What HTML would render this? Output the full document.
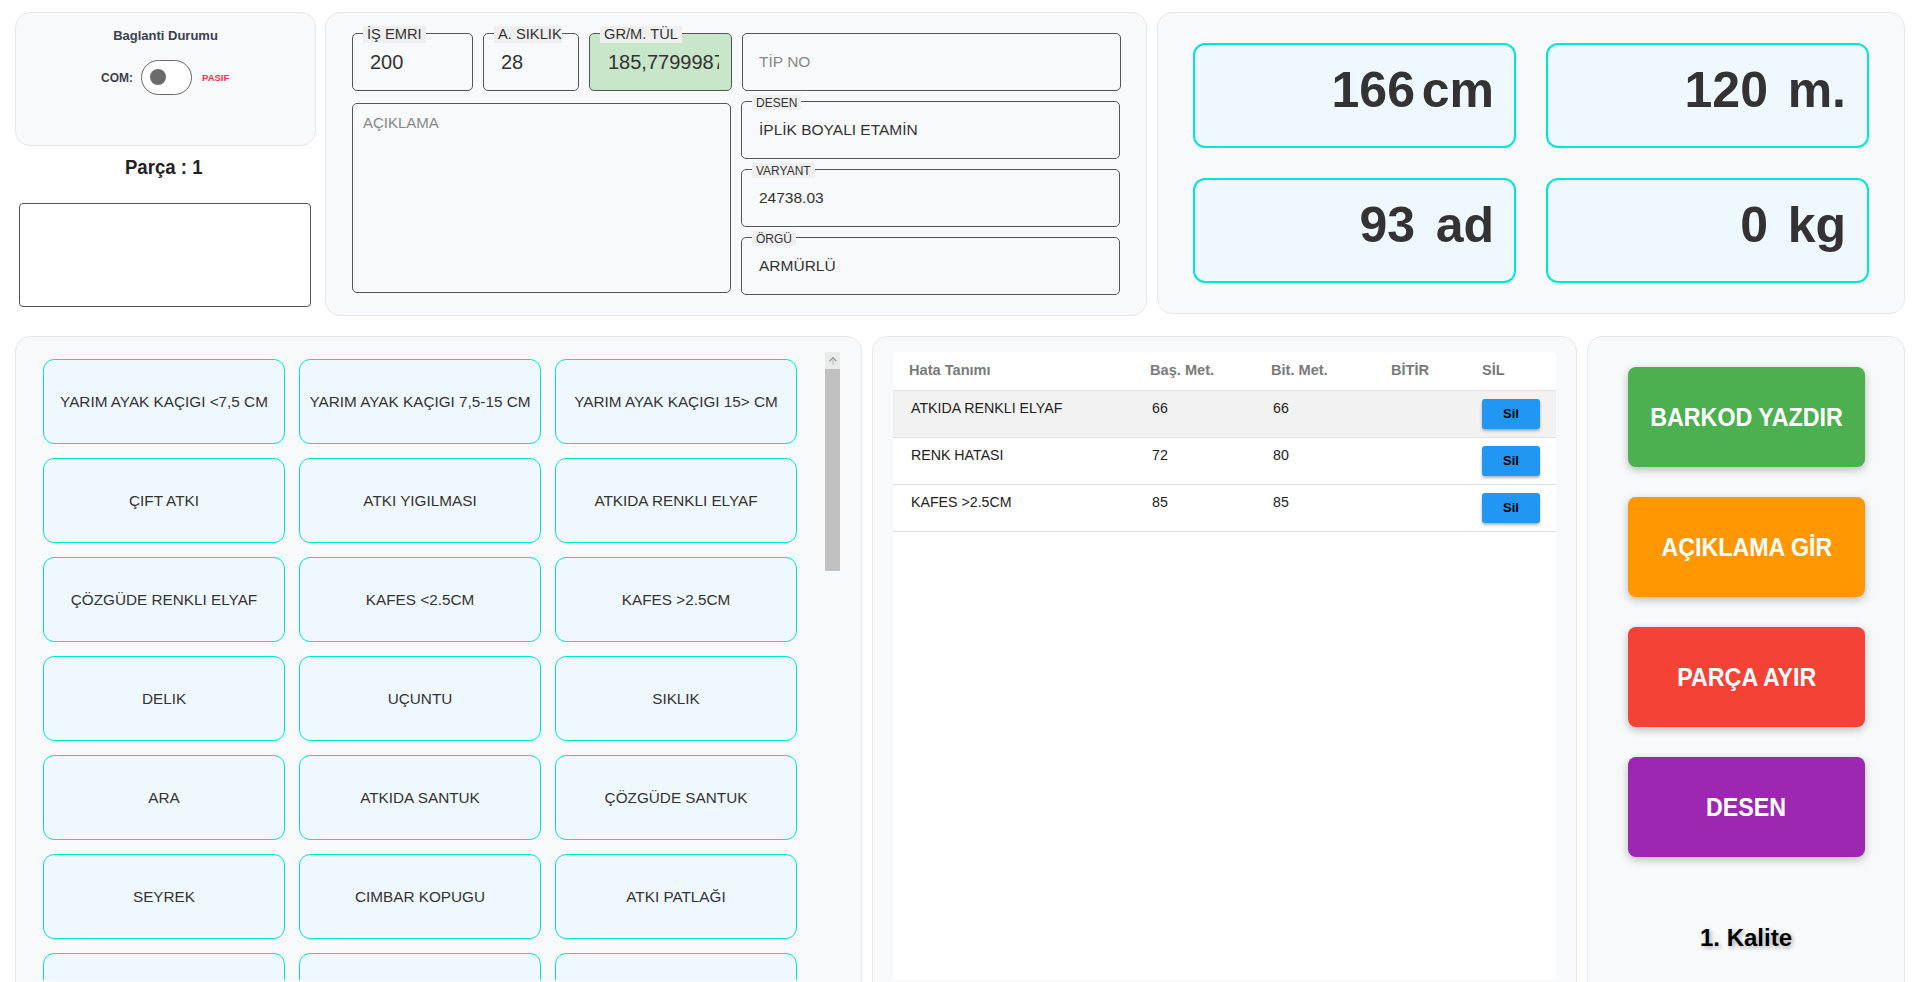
<!DOCTYPE html>
<html><head><meta charset="utf-8">
<style>
*{box-sizing:border-box;margin:0;padding:0}
html,body{width:1919px;height:982px;overflow:hidden;background:#fff;font-family:"Liberation Sans",sans-serif;color:#333}
.abs{position:absolute}
.panel{position:absolute;background:#f8f9fa;border:1px solid #e6e8eb;border-radius:15px}
.fs{position:absolute;border:1px solid #555;border-radius:5px}
.lg{position:absolute;background:#efefef;color:#333;white-space:nowrap;line-height:17px;padding:0 4px}
.lg.s{font-size:12px;line-height:14px;padding-top:1px}
.val{position:absolute;white-space:nowrap;color:#333}
.cy{position:absolute;background:#f0f8ff;border:1px solid #00e3d4;border-radius:11px;width:242px;height:85px;display:flex;align-items:center;justify-content:center;font-size:15.3px;color:#333;white-space:nowrap;padding-top:0px}
.big{position:absolute;background:#f0f8ff;border:2px solid #00e5d6;border-radius:12px}
.num{position:absolute;font-weight:bold;font-size:50px;margin-top:-1px;color:#333;white-space:nowrap;text-align:right}
.th{position:absolute;top:361.5px;font-size:14.6px;color:#7a7a7a;font-weight:bold;white-space:nowrap}
.td{position:absolute;font-size:14.2px;color:#222;white-space:nowrap;margin-top:-0.5px}
.sil{position:absolute;left:1482px;width:58px;height:30px;background:#2196f3;border-radius:3px;box-shadow:0 2px 3px rgba(0,0,0,.3);color:#000;font-weight:bold;font-size:13px;display:flex;align-items:center;justify-content:center;padding-bottom:1px}
.rb{position:absolute;left:1628px;width:237px;height:100px;border-radius:8px;box-shadow:0 3px 8px rgba(0,0,0,.25);color:#fff;font-weight:bold;font-size:25px;display:flex;align-items:center;justify-content:center;white-space:nowrap}
</style></head><body>

<!-- Panel A -->
<div class="panel" style="left:15px;top:12px;width:301px;height:134px"></div>
<div class="abs" style="left:15px;top:28px;width:301px;text-align:center;font-size:13px;font-weight:bold;color:#3a4150">Baglanti Durumu</div>
<div class="abs" style="left:101px;top:71px;font-size:12px;font-weight:bold;color:#3a4150">COM:</div>
<div class="abs" style="left:141px;top:60px;width:51px;height:35px;border:1px solid #666;border-radius:18px;background:#fff"></div>
<div class="abs" style="left:150px;top:69px;width:16px;height:16px;border-radius:50%;background:#6b6b6b"></div>
<div class="abs" style="left:202px;top:72px;font-size:9.5px;font-weight:bold;color:#ff3346">PASIF</div>

<div class="abs" style="left:13px;top:156px;width:301px;text-align:center;font-size:20px;font-weight:bold;color:#222"><span style="display:inline-block;transform:scaleX(.93)">Parça : 1</span></div>
<div class="abs" style="left:19px;top:203px;width:292px;height:104px;border:1px solid #555;border-radius:4px;background:#fff"></div>

<!-- Panel B -->
<div class="panel" style="left:325px;top:12px;width:822px;height:304px"></div>
<div class="fs" style="left:352px;top:33px;width:121px;height:58px"></div>
<div class="lg" style="left:363px;top:26px;font-size:14.7px">İŞ EMRI</div>
<div class="val" style="left:370px;top:51px;font-size:20px">200</div>

<div class="fs" style="left:483px;top:33px;width:96px;height:58px"></div>
<div class="lg" style="left:494px;top:26px;font-size:14.7px;padding-right:0">A. SIKLIK</div>
<div class="val" style="left:501px;top:51px;font-size:20px">28</div>

<div class="fs" style="left:589px;top:33px;width:143px;height:58px;background:#c8e6c9;overflow:hidden"><div class="val" style="left:18px;top:17px;font-size:20px;width:111px;overflow:hidden">185,7799987</div></div>
<div class="lg" style="left:600px;top:26px;font-size:14.7px">GR/M. TÜL</div>

<div class="fs" style="left:742px;top:33px;width:379px;height:58px"></div>
<div class="val" style="left:759px;top:53px;font-size:15.5px;color:#888">TİP NO</div>

<div class="fs" style="left:352px;top:103px;width:379px;height:190px"></div>
<div class="val" style="left:363px;top:113.5px;font-size:15px;color:#888">AÇIKLAMA</div>

<div class="fs" style="left:741px;top:101px;width:379px;height:58px"></div>
<div class="lg s" style="left:752px;top:95px">DESEN</div>
<div class="val" style="left:759px;top:121px;font-size:15.5px">İPLİK BOYALI ETAMİN</div>

<div class="fs" style="left:741px;top:169px;width:379px;height:58px"></div>
<div class="lg s" style="left:752px;top:163px">VARYANT</div>
<div class="val" style="left:759px;top:189px;font-size:15.5px">24738.03</div>

<div class="fs" style="left:741px;top:237px;width:379px;height:58px"></div>
<div class="lg s" style="left:752px;top:231px">ÖRGÜ</div>
<div class="val" style="left:759px;top:257px;font-size:15.5px">ARMÜRLÜ</div>

<!-- Panel C -->
<div class="panel" style="left:1157px;top:12px;width:748px;height:302px"></div>
<div class="big" style="left:1193px;top:43px;width:323px;height:105px"></div>
<div class="num" style="right:504px;top:62px">166</div>
<div class="num" style="right:425px;top:62px">cm</div>
<div class="big" style="left:1546px;top:43px;width:323px;height:105px"></div>
<div class="num" style="right:151px;top:62px">120</div>
<div class="num" style="right:73px;top:62px">m.</div>
<div class="big" style="left:1193px;top:178px;width:323px;height:105px"></div>
<div class="num" style="right:504px;top:197px">93</div>
<div class="num" style="right:425px;top:197px">ad</div>
<div class="big" style="left:1546px;top:178px;width:323px;height:105px"></div>
<div class="num" style="right:151px;top:197px">0</div>
<div class="num" style="right:73px;top:197px">kg</div>

<!-- Panel D -->
<div class="panel" style="left:15px;top:336px;width:847px;height:700px"></div>
<div class="abs" style="left:15px;top:340px;width:830px;height:640px;overflow:hidden">
<div class="cy" style="left:28px;top:19px">YARIM AYAK KAÇIGI &lt;7,5 CM</div>
<div class="cy" style="left:284px;top:19px">YARIM AYAK KAÇIGI 7,5-15 CM</div>
<div class="cy" style="left:540px;top:19px">YARIM AYAK KAÇIGI 15&gt; CM</div>
<div class="cy" style="left:28px;top:118px">ÇIFT ATKI</div>
<div class="cy" style="left:284px;top:118px">ATKI YIGILMASI</div>
<div class="cy" style="left:540px;top:118px">ATKIDA RENKLI ELYAF</div>
<div class="cy" style="left:28px;top:217px">ÇÖZGÜDE RENKLI ELYAF</div>
<div class="cy" style="left:284px;top:217px">KAFES &lt;2.5CM</div>
<div class="cy" style="left:540px;top:217px">KAFES &gt;2.5CM</div>
<div class="cy" style="left:28px;top:316px">DELIK</div>
<div class="cy" style="left:284px;top:316px">UÇUNTU</div>
<div class="cy" style="left:540px;top:316px">SIKLIK</div>
<div class="cy" style="left:28px;top:415px">ARA</div>
<div class="cy" style="left:284px;top:415px">ATKIDA SANTUK</div>
<div class="cy" style="left:540px;top:415px">ÇÖZGÜDE SANTUK</div>
<div class="cy" style="left:28px;top:514px">SEYREK</div>
<div class="cy" style="left:284px;top:514px">CIMBAR KOPUGU</div>
<div class="cy" style="left:540px;top:514px">ATKI PATLAĞI</div>
<div class="cy" style="left:28px;top:613px"></div>
<div class="cy" style="left:284px;top:613px"></div>
<div class="cy" style="left:540px;top:613px"></div>
</div>
<!-- scrollbar -->
<div class="abs" style="left:825px;top:352px;width:15px;height:17px;background:#e9eaea"></div>
<svg class="abs" style="left:825px;top:352px" width="15" height="17" viewBox="0 0 15 17"><path d="M8 6.5 V13" stroke="#c4c4c4" stroke-width="1.3" fill="none"/><path d="M4.6 9.2 L8 5.6 L11.4 9.2" stroke="#9c9c9c" stroke-width="1.3" fill="none"/></svg>
<div class="abs" style="left:825px;top:369px;width:15px;height:202px;background:#c1c1c1"></div>

<!-- Panel E -->
<div class="panel" style="left:872px;top:336px;width:705px;height:700px"></div>
<div class="abs" style="left:893px;top:352px;width:663px;height:628px;background:#fff;border-radius:4px"></div>
<div class="th" style="left:909px">Hata Tanımı</div>
<div class="th" style="left:1150px">Baş. Met.</div>
<div class="th" style="left:1271px">Bit. Met.</div>
<div class="th" style="left:1391px">BİTİR</div>
<div class="th" style="left:1482px">SİL</div>
<div class="abs" style="left:893px;top:390px;width:663px;height:1px;background:#e0e0e0"></div>
<div class="abs" style="left:893px;top:391px;width:663px;height:46px;background:#f2f2f2"></div>
<div class="abs" style="left:893px;top:437px;width:663px;height:1px;background:#e0e0e0"></div>
<div class="abs" style="left:893px;top:484px;width:663px;height:1px;background:#e0e0e0"></div>
<div class="abs" style="left:893px;top:531px;width:663px;height:1px;background:#e0e0e0"></div>
<div class="td" style="left:911px;top:400px">ATKIDA RENKLI ELYAF</div>
<div class="td" style="left:1152px;top:400px">66</div>
<div class="td" style="left:1273px;top:400px">66</div>
<div class="sil" style="top:399px">Sil</div>
<div class="td" style="left:911px;top:447px">RENK HATASI</div>
<div class="td" style="left:1152px;top:447px">72</div>
<div class="td" style="left:1273px;top:447px">80</div>
<div class="sil" style="top:446px">Sil</div>
<div class="td" style="left:911px;top:494px">KAFES &gt;2.5CM</div>
<div class="td" style="left:1152px;top:494px">85</div>
<div class="td" style="left:1273px;top:494px">85</div>
<div class="sil" style="top:493px">Sil</div>

<!-- Panel F -->
<div class="panel" style="left:1587px;top:336px;width:318px;height:700px"></div>
<div class="rb" style="top:367px;background:#4caf50"><span style="display:inline-block;transform:scaleX(.93)">BARKOD YAZDIR</span></div>
<div class="rb" style="top:497px;background:#ff9800"><span style="display:inline-block;transform:scaleX(.93)">AÇIKLAMA GİR</span></div>
<div class="rb" style="top:627px;background:#f44336"><span style="display:inline-block;transform:scaleX(.93)">PARÇA AYIR</span></div>
<div class="rb" style="top:757px;background:#9c27b0"><span style="display:inline-block;transform:scaleX(.93)">DESEN</span></div>
<div class="abs" style="left:1587px;top:924px;width:318px;text-align:center;font-size:24px;font-weight:bold;color:#000;text-shadow:2px 2px 4px rgba(0,0,0,.3)">1. Kalite</div>

</body></html>
